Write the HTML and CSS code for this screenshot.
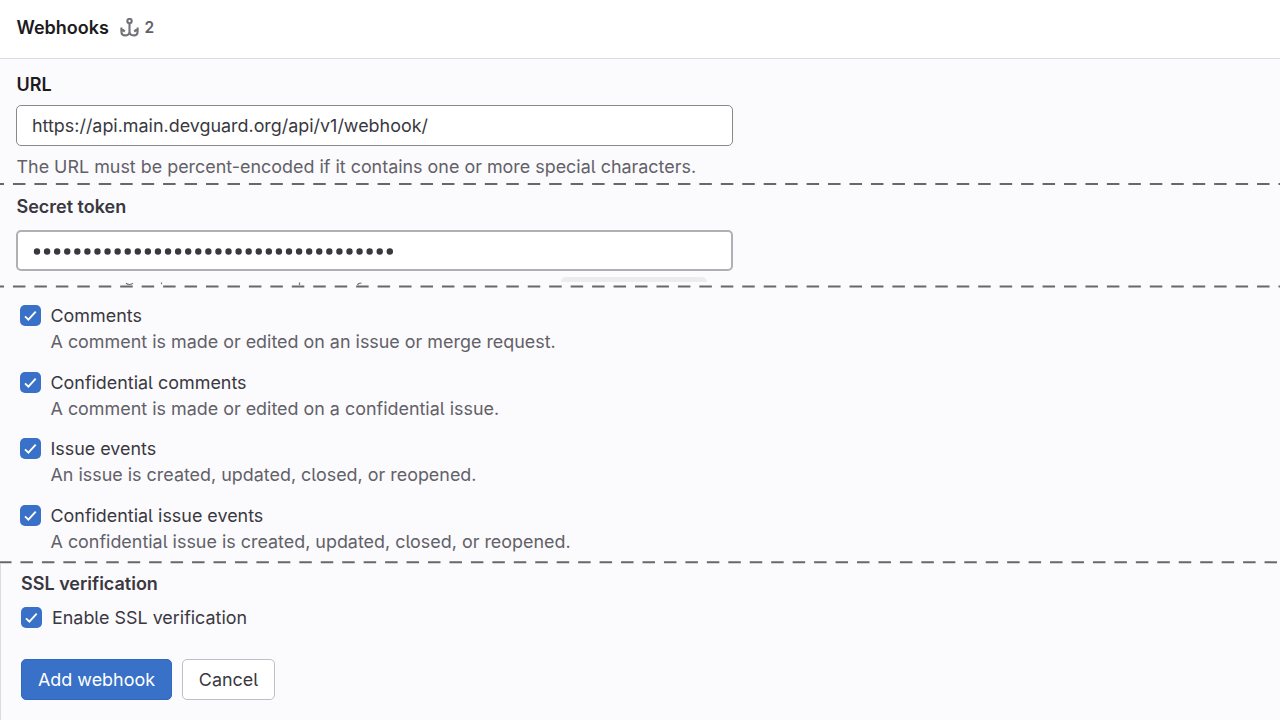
FILE: index.html
```html
<!DOCTYPE html>
<html lang="en">
<head>
<meta charset="utf-8">
<title>Webhooks</title>
<link rel="stylesheet" href="styles.css">
</head>
<body>
<main class="page">
  <header class="header">
    <h1 class="title">Webhooks</h1>
    <svg class="anchor" viewBox="0 0 20 20" width="20" height="20"><circle cx="9.500" cy="3" r="2.200"/><path d="M9.500 5.300v11.500M1.400 9.500v4c0 2.300 1.500 3.900 3.800 3.900 2.500 0 4.300-1.500 4.300-3.600 0 2.100 1.800 3.600 4.300 3.600 2.300 0 3.800-1.600 3.800-3.900v-4M1.400 10.600l3.400 3M17.600 10.600l-3.400 3"/></svg>
    <span class="count">2</span>
  </header>
  <section class="section url">
    <h2 class="label dark">URL</h2>
    <div class="input"><span class="url-text">https://api.main.devguard.org/api/v1/webhook/</span></div>
    <p class="help">The URL must be percent-encoded if it contains one or more special characters.</p>
  </section>
  <svg class="cut" width="1280" height="3"><path d="M-8.500 1H1280"/></svg>
  <section class="section token">
    <h2 class="label">Secret token</h2>
    <div class="input pale"><svg class="dots" width="364" height="8"><path d="M4 4.500H363.500"/></svg></div>
    <div class="clipped">
      <svg class="marks" width="400" height="5"><path d="M126 1.200q3 2.600 7 0M161.500 .5v1.700M299.500 .5v2.500M357.500 3q.5-2 4-2"/></svg>
      <span class="chip"></span>
    </div>
  </section>
  <svg class="cut" width="1280" height="3"><path d="M-8.500 1.500H1280"/></svg>
  <section class="section events">
    <div class="event"><svg class="check" viewBox="0 0 21 21"><rect width="21" height="21" rx="5"/><path d="M5 11.300l3.400 3.400 7.300-8"/></svg><div><p class="name">Comments</p><p class="desc">A comment is made or edited on an issue or merge request.</p></div></div>
    <div class="event"><svg class="check" viewBox="0 0 21 21"><rect width="21" height="21" rx="5"/><path d="M5 11.300l3.400 3.400 7.300-8"/></svg><div><p class="name">Confidential comments</p><p class="desc">A comment is made or edited on a confidential issue.</p></div></div>
    <div class="event"><svg class="check" viewBox="0 0 21 21"><rect width="21" height="21" rx="5"/><path d="M5 11.300l3.400 3.400 7.300-8"/></svg><div><p class="name">Issue events</p><p class="desc">An issue is created, updated, closed, or reopened.</p></div></div>
    <div class="event"><svg class="check" viewBox="0 0 21 21"><rect width="21" height="21" rx="5"/><path d="M5 11.300l3.400 3.400 7.300-8"/></svg><div><p class="name">Confidential issue events</p><p class="desc">A confidential issue is created, updated, closed, or reopened.</p></div></div>
  </section>
  <svg class="cut" width="1280" height="3"><path d="M-1 1.300H1280"/></svg>
  <section class="section ssl">
    <h2 class="label">SSL verification</h2>
    <div class="ssl-row"><svg class="check" viewBox="0 0 21 21"><rect width="21" height="21" rx="5"/><path d="M5 11.300l3.400 3.400 7.300-8"/></svg><span class="name">Enable SSL verification</span></div>
    <div class="actions"><button class="btn primary">Add webhook</button><button class="btn cancel">Cancel</button></div>
  </section>
</main>
</body>
</html>
```
FILE: styles.css
```css
* { box-sizing: border-box; }
body, h1, h2, p { margin: 0; }
body { background: #fbfafd; color: #3a383f; font-family: Inter, "Liberation Sans", sans-serif; font-size: 17.920px; line-height: 26px; font-feature-settings: "cv05" 1; overflow: hidden; }
svg { display: block; flex: none; }
p, h1, h2, span { white-space: nowrap; }
.page { width: 1280px; height: 720px; display: flex; flex-direction: column; overflow: hidden; }
.header { height: 59px; flex: none; display: flex; align-items: flex-start; background: #fff; border-bottom: 1px solid #dcdcde; padding: 15px 16.500px 0; }
.title { width: 103.500px; font-size: 18px; font-weight: 600; color: #1c1b21; }
.anchor { margin-top: 3px; fill: none; stroke: #737278; stroke-width: 2.100; }
.count { margin-left: 4.500px; font-size: 15.500px; font-weight: 600; color: #626168; }
.section { flex: none; padding-left: 16.500px; }
.label { font-size: 18px; font-weight: 600; }
.dark { color: #1c1b21; }
.url { height: 124px; padding-top: 13px; }
.input { width: 717px; height: 41px; margin-left: -.5px; border: 1.500px solid #89888d; border-radius: 5px; background: #fff; display: flex; align-items: center; padding-left: 15px; }
.url .input { margin-top: 7px; }
.pale { border: 2px solid #b0afb4; padding-left: 14.500px; }
.help { margin-top: 8px; color: #626168; }
.cut { height: 3px; overflow: hidden; fill: none; stroke: #68676b; stroke-width: 2; stroke-dasharray: 12.500 8.950; }
.token { height: 99px; padding-top: 8px; }
.token .input { margin-top: 10px; }
.dots { fill: none; stroke: #3a383f; stroke-width: 6.400; stroke-linecap: round; stroke-dasharray: .01 10.070; }
.clipped { margin-left: -16.500px; margin-top: 6px; height: 8px; display: flex; align-items: flex-start; }
.marks { margin-top: 5px; fill: none; stroke: #737278; stroke-width: 1.200; }
.chip { width: 146px; height: 5px; margin-left: 161px; border-radius: 5px 5px 0 0; background: #ececef; }
.events { height: 273px; padding: 15px 0 0 19.500px; }
.event { display: flex; height: 66.500px; }
.check { width: 21px; height: 21px; margin: 2px 10px 0 0; fill: #3871c7; }
.check path { fill: none; stroke: #fff; stroke-width: 1.900; }
.desc { color: #626168; }
.ssl { height: 157px; padding: 7px 0 0 20px; border-left: 1px solid #dcdcde; }
.ssl-row { display: flex; height: 26px; margin-top: 8px; }
.actions { display: flex; gap: 10px; margin-top: 28px; }
.btn { height: 41px; border-radius: 5px; padding: 0; font: 17.920px/26px Inter, "Liberation Sans", sans-serif; font-feature-settings: "cv05" 1; }
.primary { width: 151px; background: #3871c7; border: 1px solid #2f68bf; color: #fff; }
.cancel { width: 93px; background: #fff; border: 1.500px solid #bfbfc3; color: #3a383f; }
```
